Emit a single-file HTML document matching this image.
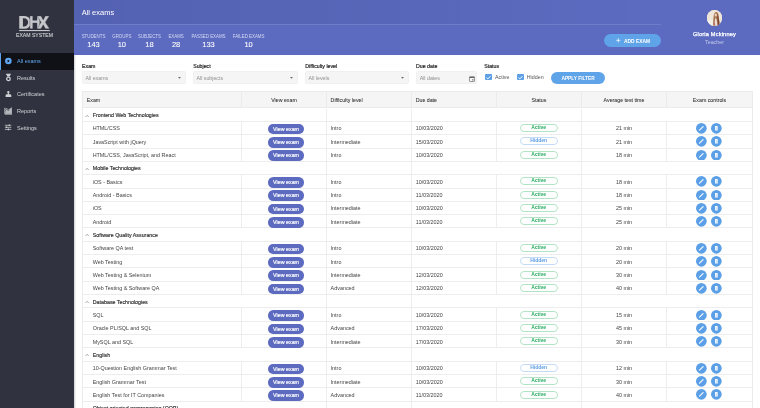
<!DOCTYPE html>
<html><head><meta charset="utf-8"><style>
html,body{margin:0;padding:0;}
body{width:760px;height:408px;overflow:hidden;position:relative;background:#fff;will-change:transform;font-family:"Liberation Sans",sans-serif;color:#333;}
.abs{position:absolute;}
.side{position:absolute;left:0;top:0;width:74px;height:408px;background:#30333f;}
.nav{position:absolute;left:0;width:74px;height:16.7px;}
.nav .t{position:absolute;left:17px;top:0;font-size:5.5px;line-height:16.5px;color:#d3d4d8;white-space:nowrap;}
.nav svg{position:absolute;left:2px;}
.nav.on{background:#0f1116;}
.nav.on:before{content:"";position:absolute;left:0;top:0;width:1.2px;height:100%;background:#5ea2ea;}
.nav.on .t{color:#66aaf2;}
.hdr{position:absolute;left:74px;top:0;width:686px;height:55px;background:#5c6bc0;}
.band{position:absolute;left:74px;top:0;width:587px;height:24px;background:linear-gradient(90deg,rgba(0,0,30,.085),rgba(0,0,30,.045) 55%,rgba(0,0,30,0));}
.hline{position:absolute;left:74px;top:24px;width:587px;height:1px;background:#6e7cca;}
.title{position:absolute;left:81.7px;top:8.75px;font-size:7.5px;line-height:7.5px;color:#fff;white-space:nowrap;}
.stat{position:absolute;top:34.6px;width:60px;margin-left:-30px;text-align:center;}
.stat .l{font-size:4.45px;line-height:4.4px;color:#d3d8f2;white-space:nowrap;letter-spacing:-0.03px;}
.stat .n{font-size:7.5px;line-height:7.5px;color:#fff;margin-top:2.2px;-webkit-text-stroke:0.08px #fff;}
.addbtn{position:absolute;left:604px;top:34px;width:57px;height:12.5px;border-radius:7px;background:#5fa3e8;color:#fff;}
.addbtn .t{position:absolute;left:20px;top:5.9px;font-size:4.9px;line-height:4.9px;font-weight:bold;white-space:nowrap;}
.avatar{position:absolute;left:706.5px;top:10.3px;width:15.5px;height:15.5px;border-radius:50%;overflow:hidden;background:#eadfce;}
.pname{position:absolute;left:664.5px;width:100px;text-align:center;top:31.7px;font-size:5.6px;line-height:5.6px;color:#fff;white-space:nowrap;-webkit-text-stroke:0.25px #fff;letter-spacing:0.2px;}
.prole{position:absolute;left:664.5px;width:100px;text-align:center;top:40.1px;font-size:5.3px;line-height:5.3px;color:#c4caee;white-space:nowrap;}
.flab{position:absolute;top:64px;font-size:5.25px;line-height:5.1px;color:#1e1e1e;white-space:nowrap;-webkit-text-stroke:0.18px #1e1e1e;}
.sel{position:absolute;top:71.4px;height:12.2px;box-sizing:border-box;background:#f5f5f5;border:1px solid #f0f0f0;border-radius:1.5px;}
.sel .t{position:absolute;left:2.4px;top:3.7px;font-size:5.26px;line-height:5.26px;color:#8e8e8e;white-space:nowrap;}
.sel .arr{position:absolute;right:3.8px;top:4.7px;display:block;}
.chk svg{display:block;}
.chk{position:absolute;top:73.5px;width:6.9px;height:6.9px;border-radius:1px;background:#5b9fe6;}
.clab{position:absolute;top:75.2px;font-size:5.3px;line-height:5.3px;color:#555;white-space:nowrap;}
.apply{position:absolute;left:550.8px;top:71.8px;width:54.5px;height:12.1px;border-radius:6.1px;background:#5fa3e8;color:#fff;text-align:center;font-size:4.8px;line-height:12.1px;font-weight:bold;white-space:nowrap;}
.apply span{position:relative;top:1.6px;}
.tbl{position:absolute;left:82px;top:91px;width:671px;height:330px;box-sizing:border-box;border:1px solid #ebebeb;border-bottom:none;}
.thead{position:absolute;left:82px;top:91px;width:671px;height:16.5px;background:#f5f5f5;border-bottom:1px solid #ebebeb;box-sizing:border-box;}
.th{position:absolute;top:91.7px;height:16px;line-height:16.6px;font-size:5.25px;color:#2e2e2e;white-space:nowrap;-webkit-text-stroke:0.05px #2e2e2e;}
.thl{position:absolute;top:91px;height:16px;width:1px;background:#ebebeb;}
.row{position:absolute;left:82px;width:671px;height:13.325px;border-bottom:1px solid #ededed;box-sizing:border-box;}
.vl{position:absolute;width:1px;background:#ededed;}
.c{position:absolute;top:0.6px;height:13px;line-height:13.4px;font-size:5.4px;color:#444;white-space:nowrap;}
.c1{left:10.7px;}
.c3{left:248.6px;}
.c4{left:333.8px;}
.c6{left:499.5px;width:85px;text-align:center;}
.gname{left:10.8px;font-size:5.3px;color:#2a2a2a;-webkit-text-stroke:0.14px #2a2a2a;line-height:13.8px;}
.chw{position:absolute;left:2.9px;top:6px;}
.chw svg{display:block;width:4.3px;height:2.3px;}
.vbtn{position:absolute;left:186px;top:1.9px;width:36.1px;height:10.6px;border-radius:5.3px;background:#5c6bc0;color:#fff;text-align:center;font-size:5.35px;line-height:10.8px;-webkit-text-stroke:0.17px #fff;}
.badge{position:absolute;left:437.5px;top:2.2px;width:38.3px;height:8px;box-sizing:border-box;border-radius:4px;border:0.7px solid;font-size:5px;line-height:5.5px;font-weight:bold;text-align:center;}
.act{border-color:#b2e3c4;color:#27ac5f;}
.hid{border-color:#c5dbf5;color:#5d9de6;}
.ic{position:absolute;top:1.1px;display:block;}
.shd1{position:absolute;left:74px;top:55px;width:1px;height:353px;background:#dadada;}
.shd2{position:absolute;left:75px;top:55px;width:1px;height:353px;background:#f2f2f2;}
.side{box-shadow:none;}

</style></head><body>
<div class="side">
  <svg class="abs" style="left:0;top:0" width="74" height="40" viewBox="0 0 74 40">
    <path fill-rule="evenodd" fill="#c5c6ca" d="M19.25 15.9 H24.5 A6.45 6.45 0 0 1 24.5 28.8 H19.25 Z M22.9 18.2 V26.5 H24 A4.15 4.15 0 0 0 24 18.2 Z"/>
    <path fill="#c5c6ca" stroke="#30333f" stroke-width=".35" d="M29.9 15.9 H32.8 V20.3 H37 V15.9 H39.8 V28.8 H37 V23 H32.8 V28.8 H29.9 Z"/>
    <path fill="#c5c6ca" stroke="#30333f" stroke-width=".35" d="M37 15.9 H41 L43.2 19.9 L45.3 15.9 H49.3 L45.3 22.35 L49.6 28.8 H45.5 L43.2 24.8 L41 28.8 H37 L41.1 22.35 Z"/>
    <rect x="19.1" y="30" width="30.7" height="1.1" fill="#c5c6ca"/>
    <text x="16" y="36.8" font-family="Liberation Sans" font-size="5.1" fill="#d0d1d5" stroke="#d0d1d5" stroke-width="0.1" textLength="37" lengthAdjust="spacingAndGlyphs">EXAM SYSTEM</text>
  </svg>
  <div class="nav on" style="top:53px"><svg style="top:0.7px" width="14" height="14" viewBox="0 0 14 14"><circle cx="6.35" cy="7" r="3.3" fill="#5ea6ef"/><path d="M6.35 5.6 L6.75 6.55 L7.75 6.6 L7 7.3 L7.25 8.3 L6.35 7.75 L5.45 8.3 L5.7 7.3 L4.95 6.6 L5.95 6.55Z" fill="#0f1116"/></svg><div class="t">All exams</div></div>
  <div class="nav" style="top:69.7px"><svg style="top:0.3px" width="14" height="14" viewBox="0 0 14 14"><path d="M3.9 3.8 H9 L7.6 6.6 H5.3Z" fill="#cfd0d4"/><circle cx="6.45" cy="8.9" r="1.75" fill="none" stroke="#cfd0d4" stroke-width="1.3"/></svg><div class="t">Results</div></div>
  <div class="nav" style="top:86.4px"><svg style="top:0.6px" width="14" height="14" viewBox="0 0 14 14"><circle cx="6.35" cy="5.1" r="1.2" fill="#cfd0d4"/><path d="M5.8 5.8 H6.9 V7.3 H8.2 Q9.3 7.3 9.3 8.4 V9.9 H3.6 V8.4 Q3.6 7.3 4.7 7.3 H5.8Z" fill="#cfd0d4"/></svg><div class="t">Certificates</div></div>
  <div class="nav" style="top:103.1px"><svg style="top:0.9px" width="14" height="14" viewBox="0 0 14 14"><path d="M2.9 3.8 V10.1 H10.1" fill="none" stroke="#cfd0d4" stroke-width="0.9"/><path d="M3.4 9.7 V7.5 L4.7 5.2 L6.2 7 L7.6 5.6 L9.9 3.8 V9.7Z" fill="#cfd0d4" opacity=".85"/><path d="M3.4 6.2 L4.7 4.2 L6.2 6 L9.9 3.6" fill="none" stroke="#cfd0d4" stroke-width=".6"/></svg><div class="t">Reports</div></div>
  <div class="nav" style="top:119.8px"><svg style="top:1.2px" width="14" height="14" viewBox="0 0 14 14"><path d="M2.9 4.3 H9.3 M2.9 6.3 H9.3 M2.9 8.4 H9.3" stroke="#cfd0d4" stroke-width="0.75"/><path d="M7.3 3.5 V5.1 M4.6 5.5 V7.1 M6.4 7.6 V9.2" stroke="#cfd0d4" stroke-width="1.1"/></svg><div class="t">Settings</div></div>
</div>
<div class="hdr"></div><div class="shd1"></div><div class="shd2"></div>
<div class="band"></div>
<div class="hline"></div>
<div class="title">All exams</div>
<div class="stat" style="left:93.5px"><div class="l">STUDENTS</div><div class="n">143</div></div>
<div class="stat" style="left:121.8px"><div class="l">GROUPS</div><div class="n">10</div></div>
<div class="stat" style="left:149.5px"><div class="l">SUBJECTS</div><div class="n">18</div></div>
<div class="stat" style="left:176.1px"><div class="l">EXAMS</div><div class="n">28</div></div>
<div class="stat" style="left:208.5px"><div class="l">PASSED EXAMS</div><div class="n">133</div></div>
<div class="stat" style="left:248.6px"><div class="l">FAILED EXAMS</div><div class="n">10</div></div>
<div class="addbtn"><svg class="abs" style="left:12px;top:4px" width="4.6" height="4.6" viewBox="0 0 10 10"><path d="M5 0.5 V9.5 M0.5 5 H9.5" stroke="#fff" stroke-width="1.6"/></svg><div class="t">ADD EXAM</div></div>
<div class="avatar"><svg width="15.5" height="15.5" viewBox="0 0 31 31"><rect width="31" height="31" fill="#eee6d8"/><rect x="0" y="20" width="12" height="11" fill="#f3eee6"/><path d="M12.5 31 C12 25 12.5 17 13.5 11 C14 6 16.5 3.5 19 4 C22 4.5 23 8 23 12 C23.5 18 25.5 25 25 31Z" fill="#a87655"/><path d="M20.5 8 C23 10 23.5 16 24.5 22 C25 26 25 29 24.5 31 H21.5 C21.5 25 21 18 20.5 8Z" fill="#7e4630"/><ellipse cx="17.6" cy="10.2" rx="2.4" ry="3" fill="#ead2bb"/><path d="M15 31 C15 24 15.5 17.5 17.5 15.5 C19.5 17.5 20.5 24 20.5 31Z" fill="#eadcd0"/><path d="M13 31 C13.5 27 14 25 15 24 L15.5 31Z" fill="#b9584a"/></svg></div>
<div class="pname">Gloria Mckinney</div>
<div class="prole">Teacher</div>

<div class="flab" style="left:82px">Exam</div>
<div class="sel" style="left:82px;width:104px"><div class="t">All exams</div><svg class="arr" width="3" height="2" viewBox="0 0 6 4"><path d="M0 0 H6 L3 3.6Z" fill="#6b6b6b"/></svg></div>
<div class="flab" style="left:193.2px">Subject</div>
<div class="sel" style="left:193.1px;width:104.7px"><div class="t">All subjects</div><svg class="arr" width="3" height="2" viewBox="0 0 6 4"><path d="M0 0 H6 L3 3.6Z" fill="#6b6b6b"/></svg></div>
<div class="flab" style="left:305.2px">Difficulty level</div>
<div class="sel" style="left:305.2px;width:103.4px"><div class="t">All levels</div><svg class="arr" width="3" height="2" viewBox="0 0 6 4"><path d="M0 0 H6 L3 3.6Z" fill="#6b6b6b"/></svg></div>
<div class="flab" style="left:416px">Due date</div>
<div class="sel" style="left:416.3px;width:60.3px"><div class="t">All dates</div><svg class="abs" style="left:51.5px;top:3.4px" width="6" height="6" viewBox="0 0 12 12"><rect x="1" y="1.5" width="10" height="9.5" rx="1" fill="none" stroke="#666" stroke-width="1.3"/><rect x="1" y="1.5" width="10" height="2.5" fill="#666"/><rect x="6.5" y="6.5" width="2.5" height="2.5" fill="#666"/></svg></div>
<div class="flab" style="left:484.2px">Status</div>
<div class="chk" style="left:485.2px"><svg width="6.9" height="6.9" viewBox="0 0 12 12"><path d="M2.6 6.3 L5 8.6 L9.5 3.7" fill="none" stroke="#fff" stroke-width="1.7"/></svg></div>
<div class="clab" style="left:495px">Active</div>
<div class="chk" style="left:517px"><svg width="6.9" height="6.9" viewBox="0 0 12 12"><path d="M2.6 6.3 L5 8.6 L9.5 3.7" fill="none" stroke="#fff" stroke-width="1.7"/></svg></div>
<div class="clab" style="left:526.8px">Hidden</div>
<div class="apply"><span>APPLY FILTER</span></div>

<div class="thead"></div>
<div class="tbl"></div>
<div class="th" style="left:86.8px">Exam</div>
<div class="th" style="left:241.5px;width:85px;text-align:center">View exam</div>
<div class="th" style="left:330.6px">Difficulty level</div>
<div class="th" style="left:415.7px">Due date</div>
<div class="th" style="left:496.4px;width:85px;text-align:center">Status</div>
<div class="th" style="left:581.5px;width:85px;text-align:center">Average test time</div>
<div class="th" style="left:666.5px;width:86px;text-align:center">Exam controls</div>
<div class="thl" style="left:241.2px"></div><div class="thl" style="left:326.2px"></div><div class="thl" style="left:411.2px"></div><div class="thl" style="left:496.2px"></div><div class="thl" style="left:581.2px"></div><div class="thl" style="left:666.2px"></div>
<div class="row grp" style="top:108.570px"><div class="chw"><svg class="chev" width="5" height="3" viewBox="0 0 10 6"><path d="M1 5 L5 1 L9 5" fill="none" stroke="#666" stroke-width="1.6"/></svg></div><div class="c gname">Frontend Web Technologies</div></div>
<div class="vl" style="left:326.2px;top:108.570px;height:13.325px"></div>
<div class="vl" style="left:411.2px;top:108.570px;height:13.325px"></div>
<div class="vl" style="left:581.2px;top:108.570px;height:13.325px"></div>
<div class="row" style="top:121.895px"><div class="c c1">HTML/CSS</div><span class="vbtn">View exam</span><div class="c c3">Intro</div><div class="c c4">10/03/2020</div><span class="badge act">Active</span><div class="c c6">21 min</div><svg class="ic" style="left:614.0px" width="10.7" height="10.7" viewBox="0 0 22 22"><circle cx="11" cy="11" r="11" fill="#5b9fe6"/><path d="M7.2 14.8 L14.6 7.4" stroke="#fff" stroke-width="2.2" stroke-linecap="round"/></svg><svg class="ic" style="left:629.4px" width="10.7" height="10.7" viewBox="0 0 22 22"><circle cx="11" cy="11" r="11" fill="#5b9fe6"/><rect x="8.2" y="6.4" width="5.6" height="9.2" rx="1.3" fill="#fff"/><rect x="9.4" y="9" width="3.2" height="5.2" rx=".5" fill="#cfe3f8"/></svg></div>
<div class="vl" style="left:241.2px;top:121.895px;height:13.325px"></div>
<div class="vl" style="left:326.2px;top:121.895px;height:13.325px"></div>
<div class="vl" style="left:411.2px;top:121.895px;height:13.325px"></div>
<div class="vl" style="left:496.2px;top:121.895px;height:13.325px"></div>
<div class="vl" style="left:581.2px;top:121.895px;height:13.325px"></div>
<div class="vl" style="left:666.2px;top:121.895px;height:13.325px"></div>
<div class="row" style="top:135.220px"><div class="c c1">JavaScript with jQuery</div><span class="vbtn">View exam</span><div class="c c3">Intermediate</div><div class="c c4">15/03/2020</div><span class="badge hid">Hidden</span><div class="c c6">21 min</div><svg class="ic" style="left:614.0px" width="10.7" height="10.7" viewBox="0 0 22 22"><circle cx="11" cy="11" r="11" fill="#5b9fe6"/><path d="M7.2 14.8 L14.6 7.4" stroke="#fff" stroke-width="2.2" stroke-linecap="round"/></svg><svg class="ic" style="left:629.4px" width="10.7" height="10.7" viewBox="0 0 22 22"><circle cx="11" cy="11" r="11" fill="#5b9fe6"/><rect x="8.2" y="6.4" width="5.6" height="9.2" rx="1.3" fill="#fff"/><rect x="9.4" y="9" width="3.2" height="5.2" rx=".5" fill="#cfe3f8"/></svg></div>
<div class="vl" style="left:241.2px;top:135.220px;height:13.325px"></div>
<div class="vl" style="left:326.2px;top:135.220px;height:13.325px"></div>
<div class="vl" style="left:411.2px;top:135.220px;height:13.325px"></div>
<div class="vl" style="left:496.2px;top:135.220px;height:13.325px"></div>
<div class="vl" style="left:581.2px;top:135.220px;height:13.325px"></div>
<div class="vl" style="left:666.2px;top:135.220px;height:13.325px"></div>
<div class="row" style="top:148.545px"><div class="c c1">HTML/CSS, JavaScript, and React</div><span class="vbtn">View exam</span><div class="c c3">Intro</div><div class="c c4">10/03/2020</div><span class="badge act">Active</span><div class="c c6">18 min</div><svg class="ic" style="left:614.0px" width="10.7" height="10.7" viewBox="0 0 22 22"><circle cx="11" cy="11" r="11" fill="#5b9fe6"/><path d="M7.2 14.8 L14.6 7.4" stroke="#fff" stroke-width="2.2" stroke-linecap="round"/></svg><svg class="ic" style="left:629.4px" width="10.7" height="10.7" viewBox="0 0 22 22"><circle cx="11" cy="11" r="11" fill="#5b9fe6"/><rect x="8.2" y="6.4" width="5.6" height="9.2" rx="1.3" fill="#fff"/><rect x="9.4" y="9" width="3.2" height="5.2" rx=".5" fill="#cfe3f8"/></svg></div>
<div class="vl" style="left:241.2px;top:148.545px;height:13.325px"></div>
<div class="vl" style="left:326.2px;top:148.545px;height:13.325px"></div>
<div class="vl" style="left:411.2px;top:148.545px;height:13.325px"></div>
<div class="vl" style="left:496.2px;top:148.545px;height:13.325px"></div>
<div class="vl" style="left:581.2px;top:148.545px;height:13.325px"></div>
<div class="vl" style="left:666.2px;top:148.545px;height:13.325px"></div>
<div class="row grp" style="top:161.870px"><div class="chw"><svg class="chev" width="5" height="3" viewBox="0 0 10 6"><path d="M1 5 L5 1 L9 5" fill="none" stroke="#666" stroke-width="1.6"/></svg></div><div class="c gname">Mobile Technologies</div></div>
<div class="vl" style="left:326.2px;top:161.870px;height:13.325px"></div>
<div class="vl" style="left:411.2px;top:161.870px;height:13.325px"></div>
<div class="vl" style="left:581.2px;top:161.870px;height:13.325px"></div>
<div class="row" style="top:175.195px"><div class="c c1">iOS - Basics</div><span class="vbtn">View exam</span><div class="c c3">Intro</div><div class="c c4">10/03/2020</div><span class="badge act">Active</span><div class="c c6">18 min</div><svg class="ic" style="left:614.0px" width="10.7" height="10.7" viewBox="0 0 22 22"><circle cx="11" cy="11" r="11" fill="#5b9fe6"/><path d="M7.2 14.8 L14.6 7.4" stroke="#fff" stroke-width="2.2" stroke-linecap="round"/></svg><svg class="ic" style="left:629.4px" width="10.7" height="10.7" viewBox="0 0 22 22"><circle cx="11" cy="11" r="11" fill="#5b9fe6"/><rect x="8.2" y="6.4" width="5.6" height="9.2" rx="1.3" fill="#fff"/><rect x="9.4" y="9" width="3.2" height="5.2" rx=".5" fill="#cfe3f8"/></svg></div>
<div class="vl" style="left:241.2px;top:175.195px;height:13.325px"></div>
<div class="vl" style="left:326.2px;top:175.195px;height:13.325px"></div>
<div class="vl" style="left:411.2px;top:175.195px;height:13.325px"></div>
<div class="vl" style="left:496.2px;top:175.195px;height:13.325px"></div>
<div class="vl" style="left:581.2px;top:175.195px;height:13.325px"></div>
<div class="vl" style="left:666.2px;top:175.195px;height:13.325px"></div>
<div class="row" style="top:188.520px"><div class="c c1">Android - Basics</div><span class="vbtn">View exam</span><div class="c c3">Intro</div><div class="c c4">11/03/2020</div><span class="badge act">Active</span><div class="c c6">18 min</div><svg class="ic" style="left:614.0px" width="10.7" height="10.7" viewBox="0 0 22 22"><circle cx="11" cy="11" r="11" fill="#5b9fe6"/><path d="M7.2 14.8 L14.6 7.4" stroke="#fff" stroke-width="2.2" stroke-linecap="round"/></svg><svg class="ic" style="left:629.4px" width="10.7" height="10.7" viewBox="0 0 22 22"><circle cx="11" cy="11" r="11" fill="#5b9fe6"/><rect x="8.2" y="6.4" width="5.6" height="9.2" rx="1.3" fill="#fff"/><rect x="9.4" y="9" width="3.2" height="5.2" rx=".5" fill="#cfe3f8"/></svg></div>
<div class="vl" style="left:241.2px;top:188.520px;height:13.325px"></div>
<div class="vl" style="left:326.2px;top:188.520px;height:13.325px"></div>
<div class="vl" style="left:411.2px;top:188.520px;height:13.325px"></div>
<div class="vl" style="left:496.2px;top:188.520px;height:13.325px"></div>
<div class="vl" style="left:581.2px;top:188.520px;height:13.325px"></div>
<div class="vl" style="left:666.2px;top:188.520px;height:13.325px"></div>
<div class="row" style="top:201.845px"><div class="c c1">iOS</div><span class="vbtn">View exam</span><div class="c c3">Intermediate</div><div class="c c4">10/03/2020</div><span class="badge act">Active</span><div class="c c6">25 min</div><svg class="ic" style="left:614.0px" width="10.7" height="10.7" viewBox="0 0 22 22"><circle cx="11" cy="11" r="11" fill="#5b9fe6"/><path d="M7.2 14.8 L14.6 7.4" stroke="#fff" stroke-width="2.2" stroke-linecap="round"/></svg><svg class="ic" style="left:629.4px" width="10.7" height="10.7" viewBox="0 0 22 22"><circle cx="11" cy="11" r="11" fill="#5b9fe6"/><rect x="8.2" y="6.4" width="5.6" height="9.2" rx="1.3" fill="#fff"/><rect x="9.4" y="9" width="3.2" height="5.2" rx=".5" fill="#cfe3f8"/></svg></div>
<div class="vl" style="left:241.2px;top:201.845px;height:13.325px"></div>
<div class="vl" style="left:326.2px;top:201.845px;height:13.325px"></div>
<div class="vl" style="left:411.2px;top:201.845px;height:13.325px"></div>
<div class="vl" style="left:496.2px;top:201.845px;height:13.325px"></div>
<div class="vl" style="left:581.2px;top:201.845px;height:13.325px"></div>
<div class="vl" style="left:666.2px;top:201.845px;height:13.325px"></div>
<div class="row" style="top:215.170px"><div class="c c1">Android</div><span class="vbtn">View exam</span><div class="c c3">Intermediate</div><div class="c c4">11/03/2020</div><span class="badge act">Active</span><div class="c c6">25 min</div><svg class="ic" style="left:614.0px" width="10.7" height="10.7" viewBox="0 0 22 22"><circle cx="11" cy="11" r="11" fill="#5b9fe6"/><path d="M7.2 14.8 L14.6 7.4" stroke="#fff" stroke-width="2.2" stroke-linecap="round"/></svg><svg class="ic" style="left:629.4px" width="10.7" height="10.7" viewBox="0 0 22 22"><circle cx="11" cy="11" r="11" fill="#5b9fe6"/><rect x="8.2" y="6.4" width="5.6" height="9.2" rx="1.3" fill="#fff"/><rect x="9.4" y="9" width="3.2" height="5.2" rx=".5" fill="#cfe3f8"/></svg></div>
<div class="vl" style="left:241.2px;top:215.170px;height:13.325px"></div>
<div class="vl" style="left:326.2px;top:215.170px;height:13.325px"></div>
<div class="vl" style="left:411.2px;top:215.170px;height:13.325px"></div>
<div class="vl" style="left:496.2px;top:215.170px;height:13.325px"></div>
<div class="vl" style="left:581.2px;top:215.170px;height:13.325px"></div>
<div class="vl" style="left:666.2px;top:215.170px;height:13.325px"></div>
<div class="row grp" style="top:228.495px"><div class="chw"><svg class="chev" width="5" height="3" viewBox="0 0 10 6"><path d="M1 5 L5 1 L9 5" fill="none" stroke="#666" stroke-width="1.6"/></svg></div><div class="c gname">Software Quality Assurance</div></div>
<div class="vl" style="left:326.2px;top:228.495px;height:13.325px"></div>
<div class="vl" style="left:411.2px;top:228.495px;height:13.325px"></div>
<div class="vl" style="left:581.2px;top:228.495px;height:13.325px"></div>
<div class="row" style="top:241.820px"><div class="c c1">Software QA test</div><span class="vbtn">View exam</span><div class="c c3">Intro</div><div class="c c4">10/03/2020</div><span class="badge act">Active</span><div class="c c6">20 min</div><svg class="ic" style="left:614.0px" width="10.7" height="10.7" viewBox="0 0 22 22"><circle cx="11" cy="11" r="11" fill="#5b9fe6"/><path d="M7.2 14.8 L14.6 7.4" stroke="#fff" stroke-width="2.2" stroke-linecap="round"/></svg><svg class="ic" style="left:629.4px" width="10.7" height="10.7" viewBox="0 0 22 22"><circle cx="11" cy="11" r="11" fill="#5b9fe6"/><rect x="8.2" y="6.4" width="5.6" height="9.2" rx="1.3" fill="#fff"/><rect x="9.4" y="9" width="3.2" height="5.2" rx=".5" fill="#cfe3f8"/></svg></div>
<div class="vl" style="left:241.2px;top:241.820px;height:13.325px"></div>
<div class="vl" style="left:326.2px;top:241.820px;height:13.325px"></div>
<div class="vl" style="left:411.2px;top:241.820px;height:13.325px"></div>
<div class="vl" style="left:496.2px;top:241.820px;height:13.325px"></div>
<div class="vl" style="left:581.2px;top:241.820px;height:13.325px"></div>
<div class="vl" style="left:666.2px;top:241.820px;height:13.325px"></div>
<div class="row" style="top:255.145px"><div class="c c1">Web Testing</div><span class="vbtn">View exam</span><div class="c c3">Intro</div><div class="c c4"></div><span class="badge hid">Hidden</span><div class="c c6">20 min</div><svg class="ic" style="left:614.0px" width="10.7" height="10.7" viewBox="0 0 22 22"><circle cx="11" cy="11" r="11" fill="#5b9fe6"/><path d="M7.2 14.8 L14.6 7.4" stroke="#fff" stroke-width="2.2" stroke-linecap="round"/></svg><svg class="ic" style="left:629.4px" width="10.7" height="10.7" viewBox="0 0 22 22"><circle cx="11" cy="11" r="11" fill="#5b9fe6"/><rect x="8.2" y="6.4" width="5.6" height="9.2" rx="1.3" fill="#fff"/><rect x="9.4" y="9" width="3.2" height="5.2" rx=".5" fill="#cfe3f8"/></svg></div>
<div class="vl" style="left:241.2px;top:255.145px;height:13.325px"></div>
<div class="vl" style="left:326.2px;top:255.145px;height:13.325px"></div>
<div class="vl" style="left:411.2px;top:255.145px;height:13.325px"></div>
<div class="vl" style="left:496.2px;top:255.145px;height:13.325px"></div>
<div class="vl" style="left:581.2px;top:255.145px;height:13.325px"></div>
<div class="vl" style="left:666.2px;top:255.145px;height:13.325px"></div>
<div class="row" style="top:268.470px"><div class="c c1">Web Testing &amp; Selenium</div><span class="vbtn">View exam</span><div class="c c3">Intermediate</div><div class="c c4">12/03/2020</div><span class="badge act">Active</span><div class="c c6">30 min</div><svg class="ic" style="left:614.0px" width="10.7" height="10.7" viewBox="0 0 22 22"><circle cx="11" cy="11" r="11" fill="#5b9fe6"/><path d="M7.2 14.8 L14.6 7.4" stroke="#fff" stroke-width="2.2" stroke-linecap="round"/></svg><svg class="ic" style="left:629.4px" width="10.7" height="10.7" viewBox="0 0 22 22"><circle cx="11" cy="11" r="11" fill="#5b9fe6"/><rect x="8.2" y="6.4" width="5.6" height="9.2" rx="1.3" fill="#fff"/><rect x="9.4" y="9" width="3.2" height="5.2" rx=".5" fill="#cfe3f8"/></svg></div>
<div class="vl" style="left:241.2px;top:268.470px;height:13.325px"></div>
<div class="vl" style="left:326.2px;top:268.470px;height:13.325px"></div>
<div class="vl" style="left:411.2px;top:268.470px;height:13.325px"></div>
<div class="vl" style="left:496.2px;top:268.470px;height:13.325px"></div>
<div class="vl" style="left:581.2px;top:268.470px;height:13.325px"></div>
<div class="vl" style="left:666.2px;top:268.470px;height:13.325px"></div>
<div class="row" style="top:281.795px"><div class="c c1">Web Testing &amp; Software QA</div><span class="vbtn">View exam</span><div class="c c3">Advanced</div><div class="c c4">12/03/2020</div><span class="badge act">Active</span><div class="c c6">40 min</div><svg class="ic" style="left:614.0px" width="10.7" height="10.7" viewBox="0 0 22 22"><circle cx="11" cy="11" r="11" fill="#5b9fe6"/><path d="M7.2 14.8 L14.6 7.4" stroke="#fff" stroke-width="2.2" stroke-linecap="round"/></svg><svg class="ic" style="left:629.4px" width="10.7" height="10.7" viewBox="0 0 22 22"><circle cx="11" cy="11" r="11" fill="#5b9fe6"/><rect x="8.2" y="6.4" width="5.6" height="9.2" rx="1.3" fill="#fff"/><rect x="9.4" y="9" width="3.2" height="5.2" rx=".5" fill="#cfe3f8"/></svg></div>
<div class="vl" style="left:241.2px;top:281.795px;height:13.325px"></div>
<div class="vl" style="left:326.2px;top:281.795px;height:13.325px"></div>
<div class="vl" style="left:411.2px;top:281.795px;height:13.325px"></div>
<div class="vl" style="left:496.2px;top:281.795px;height:13.325px"></div>
<div class="vl" style="left:581.2px;top:281.795px;height:13.325px"></div>
<div class="vl" style="left:666.2px;top:281.795px;height:13.325px"></div>
<div class="row grp" style="top:295.120px"><div class="chw"><svg class="chev" width="5" height="3" viewBox="0 0 10 6"><path d="M1 5 L5 1 L9 5" fill="none" stroke="#666" stroke-width="1.6"/></svg></div><div class="c gname">Database Technologies</div></div>
<div class="vl" style="left:326.2px;top:295.120px;height:13.325px"></div>
<div class="vl" style="left:411.2px;top:295.120px;height:13.325px"></div>
<div class="vl" style="left:581.2px;top:295.120px;height:13.325px"></div>
<div class="row" style="top:308.445px"><div class="c c1">SQL</div><span class="vbtn">View exam</span><div class="c c3">Intro</div><div class="c c4">10/03/2020</div><span class="badge act">Active</span><div class="c c6">15 min</div><svg class="ic" style="left:614.0px" width="10.7" height="10.7" viewBox="0 0 22 22"><circle cx="11" cy="11" r="11" fill="#5b9fe6"/><path d="M7.2 14.8 L14.6 7.4" stroke="#fff" stroke-width="2.2" stroke-linecap="round"/></svg><svg class="ic" style="left:629.4px" width="10.7" height="10.7" viewBox="0 0 22 22"><circle cx="11" cy="11" r="11" fill="#5b9fe6"/><rect x="8.2" y="6.4" width="5.6" height="9.2" rx="1.3" fill="#fff"/><rect x="9.4" y="9" width="3.2" height="5.2" rx=".5" fill="#cfe3f8"/></svg></div>
<div class="vl" style="left:241.2px;top:308.445px;height:13.325px"></div>
<div class="vl" style="left:326.2px;top:308.445px;height:13.325px"></div>
<div class="vl" style="left:411.2px;top:308.445px;height:13.325px"></div>
<div class="vl" style="left:496.2px;top:308.445px;height:13.325px"></div>
<div class="vl" style="left:581.2px;top:308.445px;height:13.325px"></div>
<div class="vl" style="left:666.2px;top:308.445px;height:13.325px"></div>
<div class="row" style="top:321.770px"><div class="c c1">Oracle PL/SQL and SQL</div><span class="vbtn">View exam</span><div class="c c3">Advanced</div><div class="c c4">17/03/2020</div><span class="badge act">Active</span><div class="c c6">45 min</div><svg class="ic" style="left:614.0px" width="10.7" height="10.7" viewBox="0 0 22 22"><circle cx="11" cy="11" r="11" fill="#5b9fe6"/><path d="M7.2 14.8 L14.6 7.4" stroke="#fff" stroke-width="2.2" stroke-linecap="round"/></svg><svg class="ic" style="left:629.4px" width="10.7" height="10.7" viewBox="0 0 22 22"><circle cx="11" cy="11" r="11" fill="#5b9fe6"/><rect x="8.2" y="6.4" width="5.6" height="9.2" rx="1.3" fill="#fff"/><rect x="9.4" y="9" width="3.2" height="5.2" rx=".5" fill="#cfe3f8"/></svg></div>
<div class="vl" style="left:241.2px;top:321.770px;height:13.325px"></div>
<div class="vl" style="left:326.2px;top:321.770px;height:13.325px"></div>
<div class="vl" style="left:411.2px;top:321.770px;height:13.325px"></div>
<div class="vl" style="left:496.2px;top:321.770px;height:13.325px"></div>
<div class="vl" style="left:581.2px;top:321.770px;height:13.325px"></div>
<div class="vl" style="left:666.2px;top:321.770px;height:13.325px"></div>
<div class="row" style="top:335.095px"><div class="c c1">MySQL and SQL</div><span class="vbtn">View exam</span><div class="c c3">Intermediate</div><div class="c c4">17/03/2020</div><span class="badge act">Active</span><div class="c c6">30 min</div><svg class="ic" style="left:614.0px" width="10.7" height="10.7" viewBox="0 0 22 22"><circle cx="11" cy="11" r="11" fill="#5b9fe6"/><path d="M7.2 14.8 L14.6 7.4" stroke="#fff" stroke-width="2.2" stroke-linecap="round"/></svg><svg class="ic" style="left:629.4px" width="10.7" height="10.7" viewBox="0 0 22 22"><circle cx="11" cy="11" r="11" fill="#5b9fe6"/><rect x="8.2" y="6.4" width="5.6" height="9.2" rx="1.3" fill="#fff"/><rect x="9.4" y="9" width="3.2" height="5.2" rx=".5" fill="#cfe3f8"/></svg></div>
<div class="vl" style="left:241.2px;top:335.095px;height:13.325px"></div>
<div class="vl" style="left:326.2px;top:335.095px;height:13.325px"></div>
<div class="vl" style="left:411.2px;top:335.095px;height:13.325px"></div>
<div class="vl" style="left:496.2px;top:335.095px;height:13.325px"></div>
<div class="vl" style="left:581.2px;top:335.095px;height:13.325px"></div>
<div class="vl" style="left:666.2px;top:335.095px;height:13.325px"></div>
<div class="row grp" style="top:348.420px"><div class="chw"><svg class="chev" width="5" height="3" viewBox="0 0 10 6"><path d="M1 5 L5 1 L9 5" fill="none" stroke="#666" stroke-width="1.6"/></svg></div><div class="c gname">English</div></div>
<div class="vl" style="left:326.2px;top:348.420px;height:13.325px"></div>
<div class="vl" style="left:411.2px;top:348.420px;height:13.325px"></div>
<div class="vl" style="left:581.2px;top:348.420px;height:13.325px"></div>
<div class="row" style="top:361.745px"><div class="c c1">10-Question English Grammar Test</div><span class="vbtn">View exam</span><div class="c c3">Intro</div><div class="c c4">10/03/2020</div><span class="badge hid">Hidden</span><div class="c c6">12 min</div><svg class="ic" style="left:614.0px" width="10.7" height="10.7" viewBox="0 0 22 22"><circle cx="11" cy="11" r="11" fill="#5b9fe6"/><path d="M7.2 14.8 L14.6 7.4" stroke="#fff" stroke-width="2.2" stroke-linecap="round"/></svg><svg class="ic" style="left:629.4px" width="10.7" height="10.7" viewBox="0 0 22 22"><circle cx="11" cy="11" r="11" fill="#5b9fe6"/><rect x="8.2" y="6.4" width="5.6" height="9.2" rx="1.3" fill="#fff"/><rect x="9.4" y="9" width="3.2" height="5.2" rx=".5" fill="#cfe3f8"/></svg></div>
<div class="vl" style="left:241.2px;top:361.745px;height:13.325px"></div>
<div class="vl" style="left:326.2px;top:361.745px;height:13.325px"></div>
<div class="vl" style="left:411.2px;top:361.745px;height:13.325px"></div>
<div class="vl" style="left:496.2px;top:361.745px;height:13.325px"></div>
<div class="vl" style="left:581.2px;top:361.745px;height:13.325px"></div>
<div class="vl" style="left:666.2px;top:361.745px;height:13.325px"></div>
<div class="row" style="top:375.070px"><div class="c c1">English Grammar Test</div><span class="vbtn">View exam</span><div class="c c3">Intermediate</div><div class="c c4">10/03/2020</div><span class="badge act">Active</span><div class="c c6">30 min</div><svg class="ic" style="left:614.0px" width="10.7" height="10.7" viewBox="0 0 22 22"><circle cx="11" cy="11" r="11" fill="#5b9fe6"/><path d="M7.2 14.8 L14.6 7.4" stroke="#fff" stroke-width="2.2" stroke-linecap="round"/></svg><svg class="ic" style="left:629.4px" width="10.7" height="10.7" viewBox="0 0 22 22"><circle cx="11" cy="11" r="11" fill="#5b9fe6"/><rect x="8.2" y="6.4" width="5.6" height="9.2" rx="1.3" fill="#fff"/><rect x="9.4" y="9" width="3.2" height="5.2" rx=".5" fill="#cfe3f8"/></svg></div>
<div class="vl" style="left:241.2px;top:375.070px;height:13.325px"></div>
<div class="vl" style="left:326.2px;top:375.070px;height:13.325px"></div>
<div class="vl" style="left:411.2px;top:375.070px;height:13.325px"></div>
<div class="vl" style="left:496.2px;top:375.070px;height:13.325px"></div>
<div class="vl" style="left:581.2px;top:375.070px;height:13.325px"></div>
<div class="vl" style="left:666.2px;top:375.070px;height:13.325px"></div>
<div class="row" style="top:388.395px"><div class="c c1">English Test for IT Companies</div><span class="vbtn">View exam</span><div class="c c3">Advanced</div><div class="c c4">11/03/2020</div><span class="badge act">Active</span><div class="c c6">40 min</div><svg class="ic" style="left:614.0px" width="10.7" height="10.7" viewBox="0 0 22 22"><circle cx="11" cy="11" r="11" fill="#5b9fe6"/><path d="M7.2 14.8 L14.6 7.4" stroke="#fff" stroke-width="2.2" stroke-linecap="round"/></svg><svg class="ic" style="left:629.4px" width="10.7" height="10.7" viewBox="0 0 22 22"><circle cx="11" cy="11" r="11" fill="#5b9fe6"/><rect x="8.2" y="6.4" width="5.6" height="9.2" rx="1.3" fill="#fff"/><rect x="9.4" y="9" width="3.2" height="5.2" rx=".5" fill="#cfe3f8"/></svg></div>
<div class="vl" style="left:241.2px;top:388.395px;height:13.325px"></div>
<div class="vl" style="left:326.2px;top:388.395px;height:13.325px"></div>
<div class="vl" style="left:411.2px;top:388.395px;height:13.325px"></div>
<div class="vl" style="left:496.2px;top:388.395px;height:13.325px"></div>
<div class="vl" style="left:581.2px;top:388.395px;height:13.325px"></div>
<div class="vl" style="left:666.2px;top:388.395px;height:13.325px"></div>
<div class="row grp" style="top:401.720px"><div class="chw"><svg class="chev" width="5" height="3" viewBox="0 0 10 6"><path d="M1 5 L5 1 L9 5" fill="none" stroke="#666" stroke-width="1.6"/></svg></div><div class="c gname">Object oriented programming (OOP)</div></div>
<div class="vl" style="left:326.2px;top:401.720px;height:13.325px"></div>
<div class="vl" style="left:411.2px;top:401.720px;height:13.325px"></div>
<div class="vl" style="left:581.2px;top:401.720px;height:13.325px"></div>

</body></html>
